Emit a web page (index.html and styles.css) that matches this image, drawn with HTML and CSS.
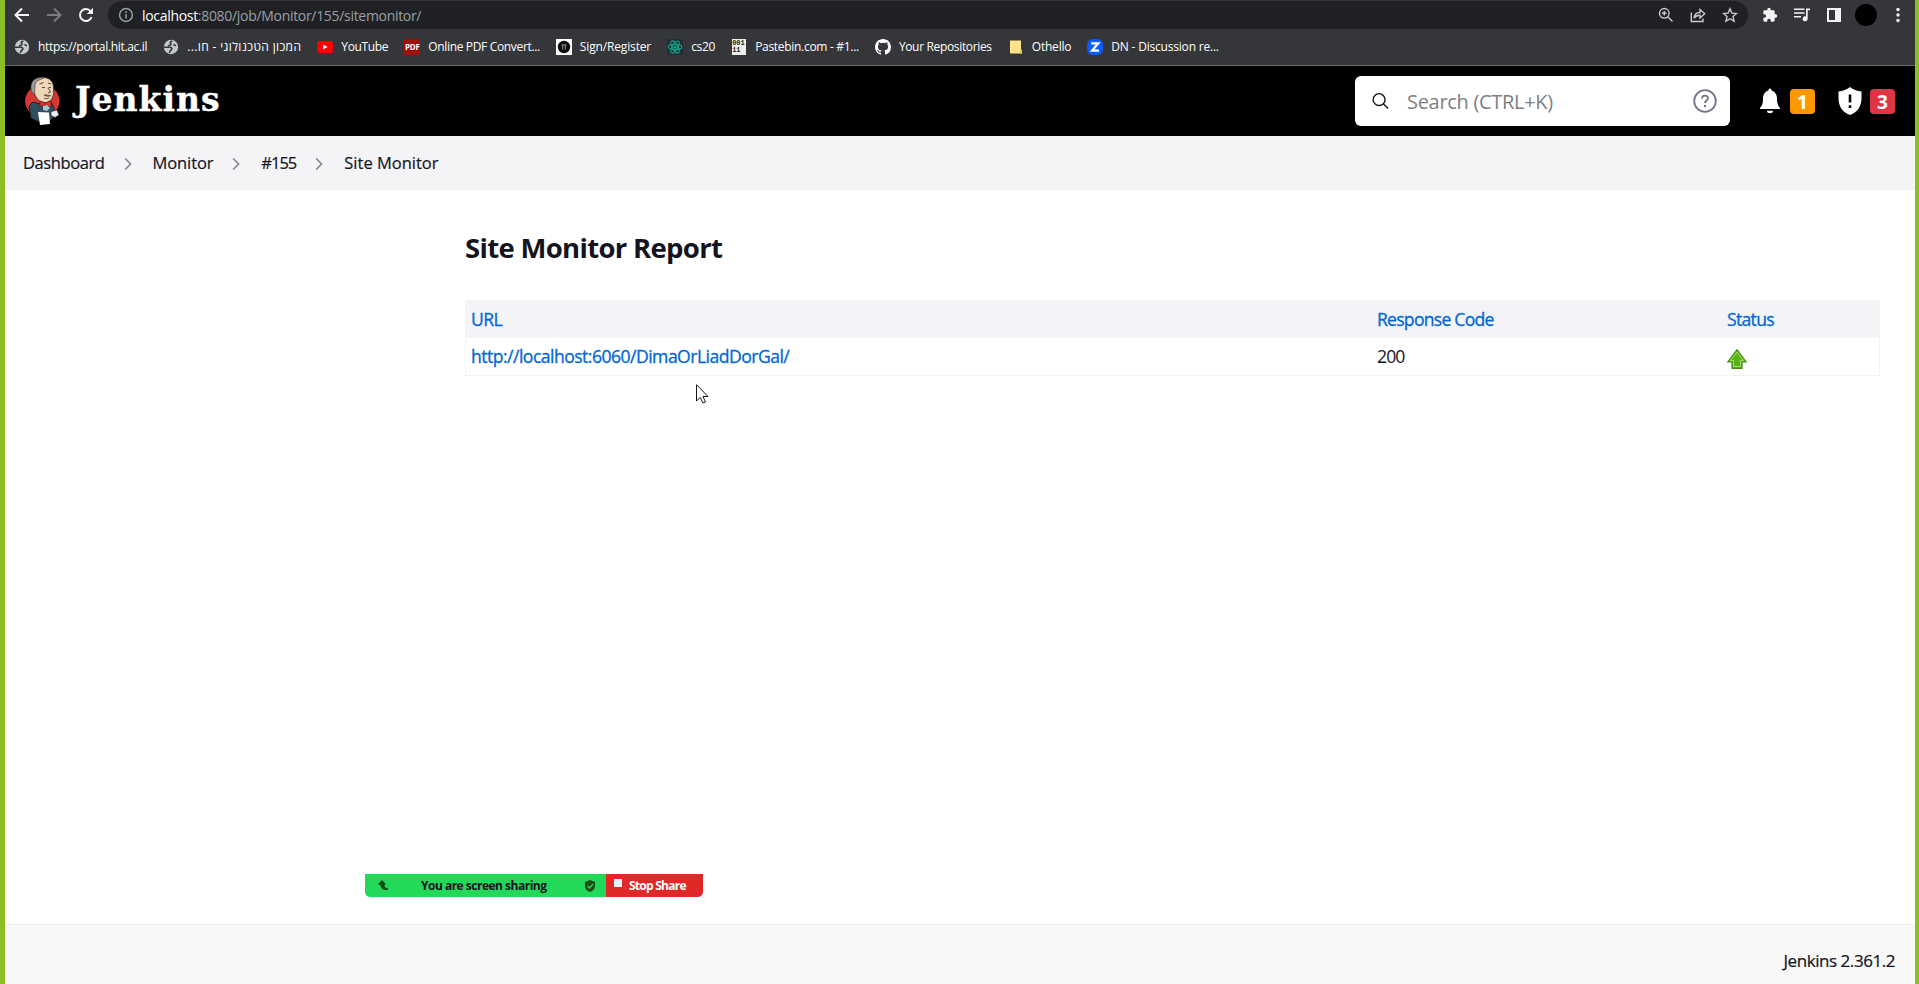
FILE: index.html
```
<!DOCTYPE html>
<html lang="en">
<head>
<meta charset="utf-8">
<title>Site Monitor Report [Jenkins]</title>
<link rel="stylesheet" href="styles.css">
</head>
<body>
<div class="frame">
  <div class="toolbar">
    <svg class="nav back" viewBox="0 0 16 16"><path d="M15 8H2M8 1.5L1.5 8L8 14.5"/></svg>
    <svg class="nav forward" viewBox="0 0 16 16"><path d="M1 8H14M8 1.5L14.5 8L8 14.5"/></svg>
    <svg class="nav reload" viewBox="0 0 16 16"><path d="M13.6 10.2A6 6 0 1 1 12.6 4.2L14 5.8"/><path class="solid" d="M15 .8V7H8.8Z"/></svg>
    <div class="omnibox">
      <svg class="info" viewBox="0 0 16 16"><circle cx="8" cy="8" r="6.4"/><path d="M8 7v4.6M8 4.3v1.6"/></svg>
      <span class="address t"><b>localhost</b>:8080/job/Monitor/155/sitemonitor/</span>
      <svg class="tool" viewBox="0 0 16 16"><circle cx="6.3" cy="6.3" r="4.8"/><path d="M10 10l4.5 4.5M6.3 4v4.6M4 6.3h4.6"/></svg>
      <svg class="tool" viewBox="0 0 16 16"><path d="M1.3 5.5V14.5H13V11.5M4 11C4.5 7.500 7 5.500 10 5.500V2.500L14.700 6.800L10 11V8.200C7.500 8.200 5.500 9 4 11Z"/></svg>
      <svg class="tool" viewBox="0 0 16 16"><path d="M8 1.800L9.900 6.100L14.500 6.500L11 9.600L12.100 14.200L8 11.700L3.900 14.200L5 9.600L1.500 6.500L6.100 6.100Z"/></svg>
    </div>
    <div class="actions">
      <svg viewBox="0 0 24 24"><path d="M20.500 11H19V7a2 2 0 0 0-2-2h-4V3.500a2.500 2.500 0 0 0-5 0V5H4a2 2 0 0 0-2 2v3.800h1.500a2.700 2.700 0 0 1 0 5.400H2V20a2 2 0 0 0 2 2h3.800v-1.500a2.700 2.700 0 0 1 5.400 0V22H17a2 2 0 0 0 2-2v-4h1.500a2.500 2.500 0 0 0 0-5z"/></svg>
      <svg viewBox="0 0 16 16"><path d="M0 1.500h10.500v1.600H0zM0 5.200h10.500v1.600H0zM0 8.900h7v1.600H0zM12 1.500h4v1.800h-2.300v8.500a2.500 2.500 0 1 1-1.700-2.400z"/></svg>
      <svg viewBox="0 0 16 16"><path fill-rule="evenodd" d="M1 1h14v14H1zM3 3v10h6V3z"/></svg>
      <span class="avatar"></span>
      <svg viewBox="0 0 16 16"><circle cx="8" cy="2.500" r="1.700"/><circle cx="8" cy="8" r="1.700"/><circle cx="8" cy="13.500" r="1.700"/></svg>
    </div>
  </div>
  <div class="bookmarks">
    <a class="bm"><svg viewBox="0 0 16 16"><circle cx="8" cy="8" r="7.200" fill="#c4c7cb"/><path d="M9.500 2.200C7 2.200 6.500 4 8 4.800C8.500 6 7 6.800 5 6.500M1 8.300H6.500C9 8.300 9.500 9.500 8.500 10.800C7 11.500 6.500 12.500 6.500 14" fill="none" stroke="#35363a" stroke-width="1.500"/><path d="M10.500 5.500L13 6.800" stroke="#35363a" stroke-width="1.500"/></svg><span class="t b1">https://portal.hit.ac.il</span></a>
    <a class="bm"><svg viewBox="0 0 16 16"><circle cx="8" cy="8" r="7.200" fill="#c4c7cb"/><path d="M9.500 2.200C7 2.200 6.500 4 8 4.800C8.500 6 7 6.800 5 6.500M1 8.300H6.500C9 8.300 9.500 9.500 8.500 10.800C7 11.500 6.500 12.500 6.500 14" fill="none" stroke="#35363a" stroke-width="1.500"/><path d="M10.500 5.500L13 6.800" stroke="#35363a" stroke-width="1.500"/></svg><span class="t b2" dir="rtl">המכון הטכנולוגי - חו...</span></a>
    <a class="bm"><svg viewBox="0 0 16 16"><rect y="2" width="16" height="12" rx="3" fill="#f00"/><path d="M6.200 5.500L10.600 8L6.200 10.500Z" fill="#fff"/></svg><span class="t b3">YouTube</span></a>
    <a class="bm"><span class="pdf">PDF</span><span class="t b4">Online PDF Convert...</span></a>
    <a class="bm"><svg viewBox="0 0 16 16"><path d="M0 0h16v16H0z" fill="#fff"/><circle cx="8" cy="8" r="6.200" fill="#0b0b0b"/><path d="M5.500 6h5M6.600 6v4.500M9.400 6v4.500" stroke="#777" stroke-width="1.300"/></svg><span class="t b5">Sign/Register</span></a>
    <a class="bm"><svg viewBox="0 0 16 16"><path d="M0 0h16v16H0z" fill="#282c34"/><g fill="none" stroke="#0fa58a" stroke-width="1.100"><ellipse cx="8" cy="8" rx="6.800" ry="2.700"/><ellipse cx="8" cy="8" rx="6.800" ry="2.700" transform="rotate(60 8 8)"/><ellipse cx="8" cy="8" rx="6.800" ry="2.700" transform="rotate(120 8 8)"/></g><circle cx="8" cy="8" r="1.500" fill="#0fa58a"/></svg><span class="t b6">cs20</span></a>
    <a class="bm"><span class="paste">001<br>11</span><span class="t b7">Pastebin.com - #1...</span></a>
    <a class="bm"><svg viewBox="0 0 16 16"><path fill="#fff" d="M8 0C3.580 0 0 3.580 0 8c0 3.540 2.290 6.530 5.470 7.590.4.070.55-.17.55-.38v-1.490c-2.010.37-2.530-.49-2.690-.94-.09-.23-.48-.94-.82-1.130-.28-.15-.68-.52-.01-.53.63-.01 1.080.58 1.230.82.72 1.210 1.870.87 2.330.66.07-.52.28-.87.51-1.070-1.780-.2-3.640-.89-3.640-3.950 0-.87.31-1.590.82-2.150-.08-.2-.36-1.020.08-2.120 0 0 .67-.21 2.200.82a7.600 7.600 0 0 1 4 0c1.530-1.040 2.200-.82 2.200-.82.44 1.100.16 1.920.08 2.120.51.560.82 1.270.82 2.150 0 3.070-1.870 3.750-3.650 3.950.29.250.54.730.54 1.480v2.200c0 .21.150.46.55.38A8 8 0 0 0 16 8c0-4.420-3.580-8-8-8z"/></svg><span class="t b8">Your Repositories</span></a>
    <a class="bm"><svg viewBox="0 0 16 16"><path d="M2 1.500h11v9.500l1 1v2.500H2z" fill="#ffe28a"/><path d="M12 10.500h2v4h-2z" fill="#f1c545"/></svg><span class="t b9">Othello</span></a>
    <a class="bm"><svg viewBox="0 0 16 16"><rect width="16" height="16" rx="6" fill="#0b5cff"/><path d="M4.200 4.300H11.300L5 11.700H12" fill="none" stroke="#fff" stroke-width="2.200"/></svg><span class="t b10">DN - Discussion re...</span></a>
  </div>
  <header class="header">
    <svg class="butler" viewBox="0 0 36 50">
      <ellipse cx="18.300" cy="25" rx="17.300" ry="16" fill="#d33833"/>
      <path d="M9 26L5 30L7 42L13 45L24 46L30 41L30 32L27 26L20 29Z" fill="#2f4f60" stroke="#14202a"/>
      <path d="M9 17C7 9 11 2 19 1.500C26 1.500 30 6 29.500 13C30.500 19 28 25 23 26.500C17 27 13 24 11 19Z" fill="#efd6b6" stroke="#222" stroke-width=".8"/>
      <path d="M11 18C10 15 11 13 11 10C11 6 14 4 19 2.500C20 2 19 .8 17.500 1.200C10 1.800 6.500 6 7 12C7 16 9 18 11 18Z" fill="#9a9a98" stroke="#333" stroke-width=".6"/>
      <path d="M15.500 8l4-1.500M24 7l3 1M18 11.500h3M24.500 11.500h2.500M24 12l2.500 4-2.500 1M20 22c2 1 4 1 5-.5" fill="none" stroke="#443a33" stroke-width=".9"/>
      <path d="M19.500 19.500c2-2 3-1.500 4.500-.5c1.500-.5 2.500 0 3.500 1c-3 1-6 1-8-.5z" fill="#6b5d50"/>
      <path d="M16 25l5 2 6-2v6l-6-2-5 2z" fill="#e0332f" stroke="#611" stroke-width=".6"/>
      <path d="M19 30l4-1 3 3-3 3-4-1z" fill="#a9c3d0"/>
      <path d="M27 35.500l6-1.500 2 5-4 2.500-4-2z" fill="#eee" stroke="#333" stroke-width=".8"/>
      <path d="M14 36L25 36.500L26 48L16 49Z" fill="#fff"/>
    </svg>
    <span class="brand t">Jenkins</span>
    <div class="search">
      <svg class="lens" viewBox="0 0 18 18"><circle cx="7.500" cy="7.500" r="6.300"/><path d="M12 12l5 5"/></svg>
      <span class="placeholder t">Search (CTRL+K)</span>
      <svg class="help" viewBox="0 0 24 24"><circle cx="12" cy="12" r="10.800"/><path d="M9 9.500C9 5.700 15 5.700 15 9.300C15 11.500 12 11.600 12 14"/><circle class="dot" cx="12" cy="17" r="1.200"/></svg>
    </div>
    <svg class="bell" viewBox="0 0 20 26"><path d="M10 .5c1 0 1.500.8 1.500 2C15 3.500 17 6.500 17 10.500c0 5 1 7 3 9.500v1H0v-1c2-2.500 3-4.500 3-9.500 0-4 2-7 5.500-8 0-1.200.5-2 1.500-2zM7 22.800h6a3 2.500 0 0 1-6 0z"/></svg>
    <span class="badge orange">1</span>
    <svg class="shield" viewBox="0 0 24 28"><path d="M12 0C15 2.500 19 4 23.500 4.500V11C23.500 19 20 25 12 28C4 25 .5 19 .5 11V4.500C5 4 9 2.500 12 0Z" fill="#fff"/><path d="M12 7.500v8M12 18.300v2.800" stroke="#000" stroke-width="2.600"/></svg>
    <span class="badge red">3</span>
  </header>
  <nav class="crumbs">
    <span class="t c1">Dashboard</span><svg viewBox="0 0 8 12"><path d="M1.200 .5l5.300 5.500-5.300 5.500"/></svg>
    <span class="t c2">Monitor</span><svg viewBox="0 0 8 12"><path d="M1.200 .5l5.300 5.500-5.300 5.500"/></svg>
    <span class="t c3">#155</span><svg viewBox="0 0 8 12"><path d="M1.200 .5l5.300 5.500-5.300 5.500"/></svg>
    <span class="t c4">Site Monitor</span>
  </nav>
  <main class="main">
    <h1><span class="t">Site Monitor Report</span></h1>
    <div class="table">
      <div class="row head"><span class="t r1">URL</span><span class="t r2">Response Code</span><span class="t r3">Status</span></div>
      <div class="row"><span class="t r4">http://localhost:6060/DimaOrLiadDorGal/</span><span class="t r5">200</span><svg class="up" viewBox="0 0 20 20"><path d="M10 .7L19.300 13H15V19.300H5V13H.7Z" fill="#59b512" stroke="#4a8a1c" stroke-width="1.200"/><path d="M10 3L16.500 11.500H13.500V17.500H6.500V11.500H3.500Z" fill="none" stroke="#a5dc7c"/></svg></div>
    </div>
  </main>
  <footer class="footer"><span class="t">Jenkins 2.361.2</span></footer>
</div>
<div class="share">
  <div class="sharing">
    <svg class="hand" viewBox="0 0 11 11"><path d="M4 0L8 4.200L6.500 4.800Q6.500 8 10 8.600V10H7Q3 9.500 2.500 5.500L0 4Z"/></svg>
    <span class="t s1">You are screen sharing</span>
    <svg class="safe" viewBox="0 0 12 12"><path d="M6 0L11 2V6Q11 10 6 12Q1 10 1 6V2Z"/><path class="tick" d="M3.500 6l2 2 3.500-4"/></svg>
  </div>
  <div class="stop"><span class="square"></span><span class="t s2">Stop Share</span></div>
</div>
<svg class="cursor" viewBox="0 0 13 20"><path d="M.5 .7V17L4.200 13.500L7 19L9.500 18L7 12.500H12Z"/></svg>
</body>
</html>
```
FILE: styles.css
```
* { box-sizing: border-box; }
body { margin: 0; font-family: "Open Sans", "Noto Sans", sans-serif; color: #14141f; }
svg { flex: none; display: block; }
.t { white-space: nowrap; }
.frame { height: 984px; display: flex; flex-direction: column; border-left: 5px solid #8cbf26; border-right: 4px solid #8cbf26; background: #fff; }

/* Browser toolbar */
.toolbar { height: 30px; flex: none; display: flex; align-items: center; background: #35363a; padding-left: 9px; }
.nav { width: 16px; height: 16px; fill: none; stroke: #f1f3f4; stroke-width: 2; margin-right: 16px; }
.forward { stroke: #7b7c80; }
.reload .solid { fill: #f1f3f4; stroke: none; }
.omnibox { width: 1640px; height: 28px; margin-left: -2px; border-radius: 14px; background: #202124; display: flex; align-items: center; padding: 0 10px; }
.info { width: 16px; height: 16px; fill: none; stroke: #9aa0a6; stroke-width: 1.5; }
.address { margin: 0 auto 0 8px; font-size: 14px; letter-spacing: -.31px; color: #9aa0a6; }
.address b { font-weight: 400; color: #fff; }
.tool { width: 16px; height: 16px; margin-left: 16px; fill: none; stroke: #c8cacd; stroke-width: 1.4; }
.actions { display: flex; align-items: center; gap: 16px; margin-left: 14px; fill: #f1f3f4; }
.actions svg { width: 16px; height: 16px; }
.avatar { width: 22px; height: 22px; border-radius: 50%; background: #000; margin: 0 -3px; }

/* Bookmarks bar */
.bookmarks { height: 36px; flex: none; display: flex; gap: 16px; background: #35363a; border-bottom: 1px solid #6a6b6e; padding: 0 0 2px 9px; align-items: center; }
.bm { display: flex; align-items: center; gap: 8px; color: #fff; font-size: 12px; height: 20px; }
.bm svg { width: 16px; height: 16px; }
.b1 { letter-spacing: -.32px; }
.b2 { letter-spacing: .36px; }
.b3, .b4, .b8 { letter-spacing: -.34px; }
.b7 { letter-spacing: -.3px; }
.b5 { letter-spacing: -.15px; }
.b9, .b10 { letter-spacing: -.2px; }
.b6 { letter-spacing: -.3px; }
.pdf { width: 16px; height: 16px; border-radius: 2px; background: #a30d0a; font: 700 8px/16px "Open Sans", sans-serif; display: flex; justify-content: center; letter-spacing: -.2px; }
.paste { width: 16px; height: 16px; border: solid #35363a; border-width: 0 1px; background: #eee; color: #222; font: 700 7px/7px "Liberation Mono", monospace; padding-top: 1px; }

/* Jenkins header */
.header { height: 70px; flex: none; background: #000; display: flex; align-items: center; padding-left: 19px; }
.butler { width: 36px; height: 50px; }
.brand { font: 700 33px/40px "DejaVu Serif", serif; letter-spacing: 1px; color: #fff; margin: 0 0 2px 15px; -webkit-text-stroke: .4px #fff; }
.search { width: 375px; height: 50px; border-radius: 6px; background: #fff; margin-left: auto; display: flex; align-items: center; padding: 0 13px 0 17px; }
.lens { width: 17px; height: 18px; fill: none; stroke: #14141f; stroke-width: 1.5; }
.placeholder { font-size: 20px; letter-spacing: -.3px; color: #808080; margin: 0 auto 0 18px; }
.help { width: 24px; height: 24px; fill: none; stroke: #73738c; stroke-width: 1.8; }
.help .dot { fill: #73738c; stroke: none; }
.bell { width: 20px; height: 26px; fill: #fff; margin-left: 30px; }
.shield { width: 24px; height: 28px; }
.badge { width: 25px; height: 25px; border-radius: 4px; color: #fff; font-size: 19px; font-weight: 700; line-height: 26px; text-align: center; }
.orange { background: #ff9800; margin: 0 23px 0 10px; }
.red { background: #dc3545; margin: 0 20px 0 8px; }

.crumbs { height: 54px; flex: none; background: #f4f4f7; display: flex; align-items: center; padding: 0 0 1px 18px; font-size: 16.500px; -webkit-text-stroke: .2px; }
.crumbs svg { width: 8px; height: 12px; fill: none; stroke: #8c8c96; stroke-width: 1.8; margin: 2px 21px 0 19px; }
.c1 { letter-spacing: -.4px; }
.c2 { letter-spacing: -.12px; }
.c3 { letter-spacing: -1px; }

/* Report */
.main { flex: 1; padding: 39px 35px 0 460px; }
h1 { margin: 0; font-size: 27.500px; font-weight: 700; line-height: 38px; height: 71px; letter-spacing: -.68px; }
.table { border: 1px solid #f3f3f6; width: 1415px; }
.row { display: grid; grid-template-columns: 906px 350px auto; height: 37px; line-height: 36px; font-size: 17.600px; padding-left: 5px; }
.head { background: #f3f3f8; color: #0066d6; line-height: 37px; -webkit-text-stroke: .3px; }
.r1 { letter-spacing: -.55px; }
.r2 { letter-spacing: -.75px; }
.r3 { letter-spacing: -.7px; }
.r4 { letter-spacing: -.53px; color: #0066d6; -webkit-text-stroke: .3px; }
.r5 { letter-spacing: -.9px; }
.up { width: 20px; height: 20px; margin-top: 11px; }

.footer { height: 60px; flex: none; background: #f8f8f8; border-top: 1px solid #efefef; display: flex; justify-content: flex-end; align-items: center; padding: 12px 20px 0 0; font-size: 17px; letter-spacing: -.45px; -webkit-text-stroke: .2px; }

/* Screen sharing bar */
.share { position: absolute; left: 365px; top: 874px; width: 338px; height: 23px; display: flex; border-radius: 0 0 5px 5px; overflow: hidden; font-size: 12px; font-weight: 700; }
.sharing { width: 241px; background: #23d959; display: flex; align-items: center; }
.hand { width: 11px; height: 11px; fill: #0a4d14; margin: 0 0 0 13px; }
.s1 { margin: 0 auto 0 32px; letter-spacing: -.5px; }
.safe { width: 12px; height: 12px; fill: #1b4d14; margin-right: 10px; }
.tick { fill: none; stroke: #23d959; stroke-width: 1.3; }
.stop { flex: 1; background: #e02828; color: #fff; display: flex; align-items: center; padding-left: 8px; }
.square { width: 8px; height: 8px; background: #dff6fb; margin: 0 7px 5px 0; }
.s2 { letter-spacing: -.75px; }
.cursor { position: absolute; left: 696px; top: 384px; width: 13px; height: 20px; fill: #fff; stroke: #14141f; stroke-width: 1; }
```
